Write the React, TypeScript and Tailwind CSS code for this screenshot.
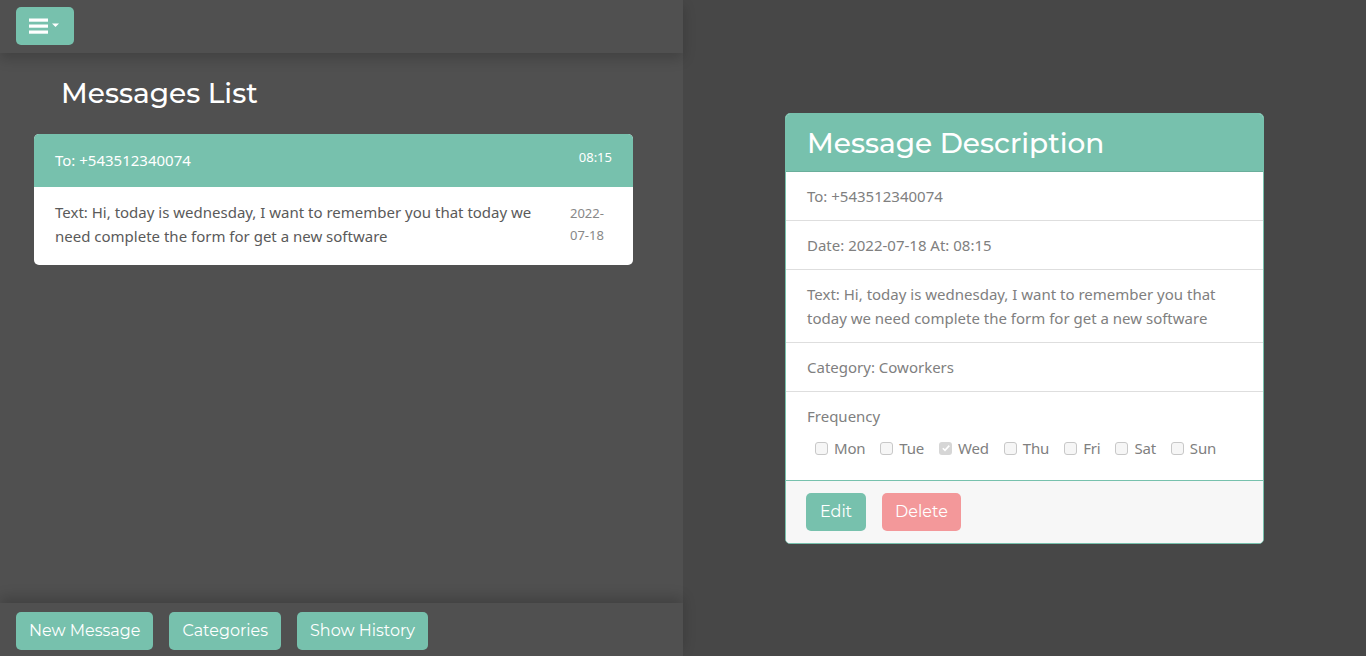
import React from 'react';

const days = ['Mon', 'Tue', 'Wed', 'Thu', 'Fri', 'Sat', 'Sun'];
const head = { fontFamily: '"Montserrat", "Noto Sans", "Open Sans", sans-serif' };
const body = { fontFamily: '"Segoe UI", "Noto Sans", "Open Sans", sans-serif' };

function MenuIcon() {
  return (
    <svg width="46" height="18" viewBox="0 0 46 18" aria-hidden="true">
      <rect x="13" y="1.5" width="19" height="3.2" fill="#fff" />
      <rect x="13" y="7.5" width="19" height="3.2" fill="#fff" />
      <rect x="13" y="13.5" width="19" height="3.2" fill="#fff" />
      <path d="M36 6.5h7l-3.5 3.5z" fill="#fff" />
    </svg>
  );
}

export default function App() {
  return (
    <div className="flex h-[656px] w-full overflow-hidden bg-[#474747]" style={body}>
      <div className="flex w-[683px] flex-col bg-[#505050]">
        <div className="relative z-10 flex h-[53px] items-start bg-[#505050] px-4 pt-[7px] shadow-[0_6px_12px_rgba(0,0,0,0.18)]">
          <button className="flex h-[38px] w-[58px] items-center justify-start rounded-[5px] bg-[#77c1ad]">
            <MenuIcon />
          </button>
        </div>
        <div className="flex-1 px-[34px]">
          <h1 className="mt-[23px] pl-[27px] text-[28px] font-medium leading-[34px] text-white" style={head}>
            Messages List
          </h1>
          <div className="mt-[24px] w-[599px] overflow-hidden rounded-[5px] bg-white">
            <div className="flex h-[53px] items-center justify-between bg-[#77c1ad] pl-[21px] pr-[21px] text-white">
              <span className="text-[15px]">To: +543512340074</span>
              <span className="-mt-[5px] text-[13px]">08:15</span>
            </div>
            <div className="flex justify-between pb-[17px] pl-[21px] pr-[29px] pt-[13px]">
              <p className="w-[490px] text-[15px] leading-[24px] text-[#5a5a5a]">
                Text: Hi, today is wednesday, I want to remember you that today we need complete the form for get a new software
              </p>
              <p className="mt-[2px] w-[34px] text-[13px] leading-[22px] text-[#888]">2022-07-18</p>
            </div>
          </div>
        </div>
        <div className="relative z-10 flex h-[53px] items-start gap-4 bg-[#505050] px-4 pt-[9px] shadow-[0_-6px_12px_rgba(0,0,0,0.18)]">
          {['New Message', 'Categories', 'Show History'].map((b) => (
            <button
              key={b}
              className="h-[38px] rounded-[5px] bg-[#77c1ad] px-[13px] text-[16px] text-white"
              style={head}
            >
              {b}
            </button>
          ))}
        </div>
      </div>

      <div className="flex flex-1 items-start justify-center pt-[113px]">
        <div className="w-[479px] overflow-hidden rounded-[5px] border border-[#77c1ad] bg-white">
          <div className="flex h-[58px] items-center border-b border-[#6aae9b] bg-[#77c1ad] px-[21px]">
            <h2 className="text-[28px] font-medium text-white" style={head}>Message Description</h2>
          </div>
          <div className="text-[15px] text-[#808080]">
            <div className="flex h-[49px] items-center border-b border-[#dedede] px-[21px]">To: +543512340074</div>
            <div className="flex h-[49px] items-center border-b border-[#dedede] px-[21px]">Date: 2022-07-18 At: 08:15</div>
            <div className="border-b border-[#dedede] px-[21px] py-[12px] leading-[24px]">
              Text: Hi, today is wednesday, I want to remember you that today we need complete the form for get a new software
            </div>
            <div className="flex h-[49px] items-center border-b border-[#dedede] px-[21px]">Category: Coworkers</div>
            <div className="h-[88px] px-[21px] pt-[13px]">
              <div className="leading-[22px]">Frequency</div>
              <div className="mt-[10px] flex items-center pl-[8px]">
                {days.map((d) => (
                  <label key={d} className="mr-[15px] flex items-center gap-[6px]">
                    <span
                      className={
                        d === 'Wed'
                          ? 'flex h-[13px] w-[13px] items-center justify-center rounded-[3px] bg-[#d6d6d6]'
                          : 'flex h-[13px] w-[13px] items-center justify-center rounded-[3px] border border-[#c8c8c8] bg-[#f6f6f6]'
                      }
                    >
                      {d === 'Wed' && (
                        <svg width="10" height="10" viewBox="0 0 10 10">
                          <path d="M1.8 5.2l2.2 2.2L8.3 2.6" stroke="#fff" strokeWidth="1.6" fill="none" />
                        </svg>
                      )}
                    </span>
                    <span className="tracking-[-0.2px]">{d}</span>
                  </label>
                ))}
              </div>
            </div>
          </div>
          <div className="flex h-[63px] items-center gap-4 border-t border-[#77c1ad] bg-[#f7f7f7] px-[20px]">
            <button className="h-[38px] rounded-[5px] bg-[#77c1ad] px-[14px] text-[16px] text-white" style={head}>Edit</button>
            <button className="h-[38px] rounded-[5px] bg-[#f3989a] px-[13px] text-[16px] text-white" style={head}>Delete</button>
          </div>
        </div>
      </div>
    </div>
  );
}
